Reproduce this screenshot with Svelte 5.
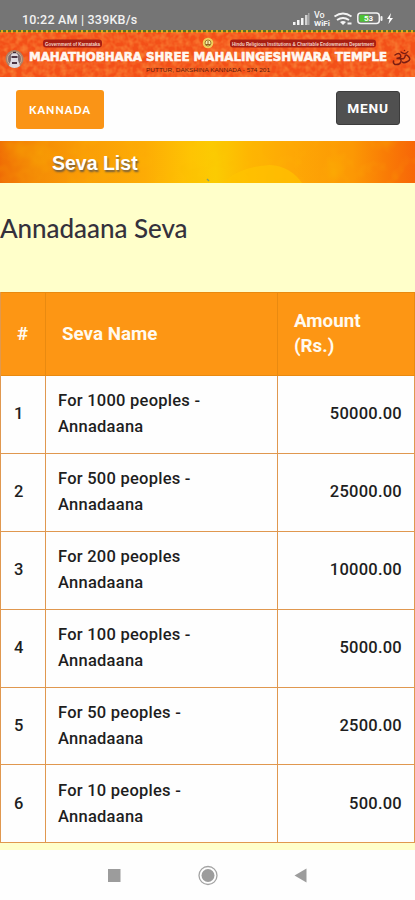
<script lang="ts">
  const sevas = [
    { name: 'For 1000 peoples -', amount: '50000.00' },
    { name: 'For 500 peoples -', amount: '25000.00' },
    { name: 'For 200 peoples', amount: '10000.00' },
    { name: 'For 100 peoples -', amount: '5000.00' },
    { name: 'For 50 peoples -', amount: '2500.00' },
    { name: 'For 10 peoples -', amount: '500.00' },
  ]
</script>

<div class="screen">
  <div class="status">
    <span class="clock">10:22 AM | 339KB/s</span>
    <svg class="signals" width="112" height="20" viewBox="0 0 112 20">
      <g fill="#f4f4f4">
        <rect x="1" y="14" width="2.500" height="3" />
        <rect x="5" y="12" width="2.500" height="5" />
        <rect x="9" y="10" width="2.500" height="7" />
        <rect x="13" y="7" width="2.500" height="10" opacity=".75" />
        <rect x="16" y="5" width="1.500" height="12" opacity=".4" />
        <text x="22" y="10" class="vo">Vo</text>
        <text x="22" y="18" class="wifi" textLength="16" lengthAdjust="spacingAndGlyphs">WiFi</text>
        <path d="M48 14l3 3 3-3q-3-2-6 0z" />
        <rect x="55.500" y="14.500" width="4" height="2" />
      </g>
      <g fill="none" stroke="#f4f4f4" stroke-width="1.800">
        <path d="M42.500 8.500q8.500-6 17 0M45 12q6-4 12 0" />
        <rect x="65.800" y="5" width="21.500" height="10.500" rx="3" stroke-width="1.500" />
      </g>
      <rect x="67.500" y="6.800" width="9.500" height="7" rx="1" fill="#4fc234" />
      <rect x="88.500" y="8" width="2" height="5" rx="1" fill="#f4f4f4" />
      <text x="72" y="13.300" class="charge">53</text>
      <path d="M99 5l-4 6h2.500l-1 5 4.500-6h-3z" fill="#fff" />
    </svg>
  </div>

  <svg class="banner" width="415" height="47" viewBox="0 0 415 47">
    <defs>
      <filter id="grain" x="0" y="0" width="1" height="1">
        <feTurbulence type="fractalNoise" baseFrequency=".18" numOctaves="2" seed="4" />
        <feColorMatrix values="0 0 0 0 1  0 0 0 0 .42  0 0 0 0 .08  .9 0 0 0 -.3" />
      </filter>
    </defs>
    <rect width="415" height="47" fill="#f35018" />
    <rect width="415" height="47" filter="url(#grain)" />
    <path d="M0 1h415" stroke="#567327" stroke-width="2" />
    <path d="M1 1.500h414" stroke="#e7a51b" stroke-width="3" stroke-dasharray="2 3" />

    <rect x="43" y="9.500" width="59" height="8" rx="3" fill="#a81f12" />
    <text x="45" y="15.600" class="ribbon" textLength="55" lengthAdjust="spacingAndGlyphs">Government of Karnataka</text>
    <rect x="230" y="9.500" width="146" height="8" rx="3" fill="#a81f12" />
    <text x="232" y="15.600" class="ribbon" textLength="142" lengthAdjust="spacingAndGlyphs">Hindu Religious Institutions &amp; Charitable Endowments Department</text>

    <circle cx="208" cy="13" r="5.300" fill="#f0d05b" />
    <circle cx="208" cy="13" r="3" fill="#f9efb0" stroke="#9d7c2d" />
    <path d="M206 14.500h4M208 11v4" stroke="#956322" />

    <g>
      <circle cx="14.500" cy="29" r="9" fill="#a9826b" />
      <circle cx="14.500" cy="29" r="7" fill="#7f6f74" stroke="#d9b99b" stroke-width=".8" />
      <path d="M11 25q3.500-5 7 0v5l2 6q-5.500 4-11 0l2-6z" fill="#ded9df" />
      <path d="M11.500 27h6M12 33h5" stroke="#4b3444" stroke-width="2" />
      <path d="M13 22.500h3" stroke="#3d2934" stroke-width="1.500" />
    </g>

    <text x="29" y="31.400" class="temple" textLength="358" lengthAdjust="spacingAndGlyphs">MAHATHOBHARA SHREE MAHALINGESHWARA TEMPLE</text>
    <text x="146" y="41.800" class="place" textLength="124" lengthAdjust="spacingAndGlyphs">PUTTUR, DAKSHINA KANNADA - 574 201</text>

    <g fill="none" stroke="#7a1d12" stroke-width="1.500" stroke-linecap="round">
      <path d="M395 25q4-3 5.500 0t-4 3.500q5.500-.5 4.500 3t-6 3q-2-1-1.500-3.500" />
      <path d="M400.500 28.500q4 1 4.500-2t3.500 0-1 5-5 .5" />
      <path d="M401 22q4 3.500 7-.5" stroke-width="1.200" />
      <path d="M404.500 20.500v.1" />
    </g>
  </svg>

  <header>
    <button class="language">KANNADA</button>
    <button class="menu">MENU</button>
  </header>

  <div class="title">
    <svg class="paint" width="415" height="42" viewBox="0 0 415 42" preserveAspectRatio="none">
      <defs>
        <linearGradient id="sun">
          <stop offset="0" stop-color="#ef6c05" />
          <stop offset=".07" stop-color="#f48905" />
          <stop offset=".2" stop-color="#fa9d06" />
          <stop offset=".35" stop-color="#fdac05" />
          <stop offset=".46" stop-color="#fec403" />
          <stop offset=".52" stop-color="#fbcb02" />
          <stop offset=".6" stop-color="#feb602" />
          <stop offset=".7" stop-color="#fea805" />
          <stop offset=".85" stop-color="#fc9804" />
          <stop offset=".93" stop-color="#f97c05" />
          <stop offset="1" stop-color="#f76608" />
        </linearGradient>
        <filter id="wash" x="0" y="0" width="1" height="1">
          <feTurbulence type="fractalNoise" baseFrequency=".04" numOctaves="3" seed="8" />
          <feColorMatrix values="0 0 0 0 .96  0 0 0 0 .5  0 0 0 0 0  .8 0 0 0 -.36" />
        </filter>
      </defs>
      <rect width="415" height="42" fill="url(#sun)" />
      <path d="M222 42q20-17 48-18 20 1 32 18z" fill="#ffc400" opacity=".65" />
      <rect width="415" height="42" filter="url(#wash)" />
      <path d="M207 38l2 2" stroke="#83a16a" stroke-width="1.500" />
    </svg>
    <h1>Seva List</h1>
  </div>

  <main>
    <h2>Annadaana Seva</h2>
    <table>
      <colgroup>
        <col class="col-no" />
        <col class="col-name" />
        <col />
      </colgroup>
      <thead>
        <tr>
          <th>#</th>
          <th>Seva Name</th>
          <th>Amount<br />(Rs.)</th>
        </tr>
      </thead>
      <tbody>
        {#each sevas as seva, i}
          <tr>
            <td>{i + 1}</td>
            <td>{seva.name}<br />Annadaana</td>
            <td class="amount">{seva.amount}</td>
          </tr>
        {/each}
      </tbody>
    </table>
  </main>

  <nav>
    <svg width="415" height="50" viewBox="0 0 415 50">
      <g fill="#9c9c9c">
        <rect x="108" y="19" width="12.500" height="13" />
        <circle cx="208" cy="25.500" r="6.500" />
        <path d="M294.500 25.500l12-7v14z" />
      </g>
      <circle cx="208" cy="25.500" r="9" fill="none" stroke="#a3a3a3" stroke-width="1.300" />
    </svg>
  </nav>
</div>

<style>
  :global(body) {
    margin: 0;
    background: #fefefe;
  }

  .screen {
    width: 415px;
    height: 900px;
    overflow: hidden;
    display: flex;
    flex-direction: column;
    font-family: Roboto, sans-serif;
    background: #fefefe;
  }

  .status {
    height: 30px;
    flex: none;
    box-sizing: border-box;
    padding: 8px 11px 0 22px;
    display: flex;
    justify-content: space-between;
    background: #757575;
    color: #f2f2f2;
  }

  .clock {
    font-size: 12.5px;
    font-weight: 500;
    line-height: 23px;
    letter-spacing: 0.2px;
    white-space: nowrap;
  }

  .vo {
    font: 500 9px Roboto, sans-serif;
  }

  .wifi {
    font: 700 7px Roboto, sans-serif;
  }

  .charge {
    font: 700 8px Roboto, sans-serif;
    fill: #fff;
  }

  .banner {
    display: block;
    flex: none;
  }

  .ribbon {
    font: 700 5px 'Liberation Sans', sans-serif;
    fill: #f7d3c4;
  }

  .temple {
    font: 700 12px 'DejaVu Sans', sans-serif;
    fill: #fff8f2;
    stroke: #fff8f2;
    stroke-width: 0.6px;
  }

  .place {
    font: 400 6px 'Liberation Sans', sans-serif;
    fill: #581c0d;
  }

  /* Header */

  header {
    height: 64px;
    flex: none;
    box-sizing: border-box;
    padding: 13px 15px 0 16px;
    display: flex;
    justify-content: space-between;
    align-items: flex-start;
  }

  button {
    border: 0;
    padding: 0;
    color: #fff;
    border-radius: 3px;
  }

  .language {
    width: 88px;
    height: 39px;
    font: 900 10.7px Lato, sans-serif;
    letter-spacing: 1.1px;
    background: #fa9416;
  }

  .menu {
    width: 64px;
    height: 34px;
    margin-top: 1px;
    font: 700 13.7px Roboto, sans-serif;
    letter-spacing: 0.8px;
    background: #505050;
    border: 1px solid #3c3c3c;
  }

  .title {
    display: grid;
    height: 42px;
    flex: none;
  }

  .paint,
  .title h1 {
    grid-area: 1 / 1;
  }

  .title h1 {
    z-index: 1;
    margin: 0;
    padding-left: 52px;
    font: 700 19.5px/44px 'Liberation Sans', sans-serif;
    color: #fff;
    text-shadow: 1px 2px 2px #6d5b42;
  }

  /* Table */

  main {
    height: 667px;
    flex: none;
    background: #ffffca;
  }

  h2 {
    height: 109px;
    box-sizing: border-box;
    margin: 0;
    padding-top: 28px;
    font: 500 26px/34px Lato, sans-serif;
    letter-spacing: -0.05px;
    color: #34313c;
  }

  table {
    width: 415px;
    table-layout: fixed;
    border-collapse: separate;
    border-spacing: 0;
    border-left: 1px solid #e0984f;
    background: #fefefe;
    color: #1e1e1e;
  }

  .col-no {
    width: 45px;
  }

  .col-name {
    width: 232px;
  }

  th,
  td {
    box-sizing: border-box;
    border: 0 solid #e0984f;
    border-width: 0 1px 1px 0;
    padding: 0 12px;
    text-align: left;
  }

  th {
    height: 84px;
    padding: 0 16px;
    border-top-width: 1px;
    font-size: 18.8px;
    font-weight: 700;
    line-height: 25px;
    color: #fffaf0;
    background: #fd9614;
    border-color: #e98a10;
  }

  td {
    height: 77.9px;
    font-size: 16.5px;
    font-weight: 500;
    line-height: 26px;
    letter-spacing: 0.25px;
  }

  td:first-child {
    padding-left: 13px;
  }

  .amount {
    text-align: right;
  }

  nav {
    height: 50px;
    flex: none;
    background: #fefefe;
  }
</style>
